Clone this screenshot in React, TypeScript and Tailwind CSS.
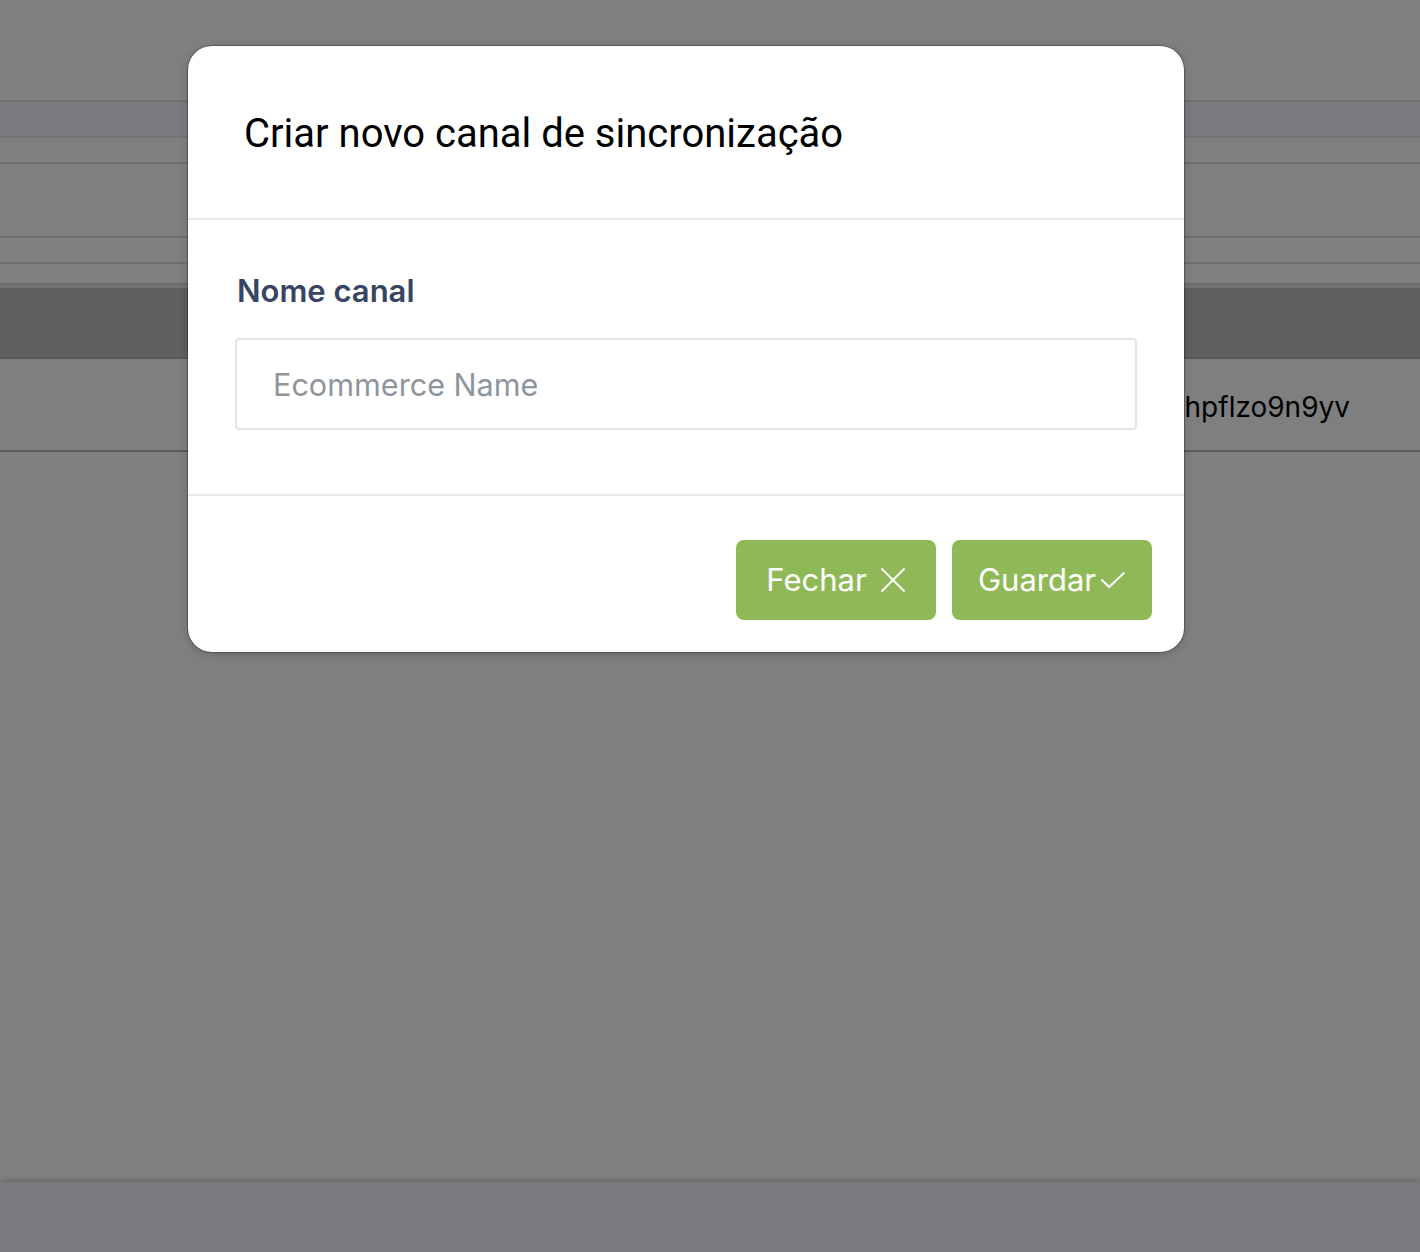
import React from "react";

const XIcon = () => (
  <svg width="26" height="26" viewBox="0 0 26 26" fill="none" stroke="currentColor" strokeWidth="2">
    <path d="M1.5 1.5L24.5 24.5M24.5 1.5L1.5 24.5" />
  </svg>
);

const CheckIcon = () => (
  <svg width="26" height="18" viewBox="0 0 26 18" fill="none" stroke="currentColor" strokeWidth="2">
    <path d="M1.5 8.5L9 16L24.5 1.5" />
  </svg>
);

const BackgroundPage = () => (
  <div className="flex h-[1252px] flex-col bg-white">
    <div className="h-[100px]" />
    <div className="h-[38px] border-y-2 border-t-[#dfe3e8] border-b-[#e6e9ee] bg-[#f4f7fd]" />
    <div className="h-[26px] border-b-2 border-[#dde2e8]" />
    <div className="h-[74px] border-b-2 border-[#dde2e8]" />
    <div className="h-[26px] border-b-2 border-[#dde2e8]" />
    <div className="h-[21px] border-b-2 border-[#d6d9dd]" />
    <div className="h-[3px] bg-[#e4e4e4]" />
    <div className="h-[71px] border-b-2 border-[#b0b0b0] bg-[#bebebe]" />
    <div className="flex h-[93px] items-center justify-end border-b-2 border-[#b8b8b8] pr-[70px]">
      <span className="pt-[4px] font-['Inter'] text-[28px] text-black">hpflzo9n9yv</span>
    </div>
    <div className="flex-1" />
    <div className="h-[70px] bg-[#f4f6fc] shadow-[0_-2px_6px_rgba(0,0,0,0.18)]" />
  </div>
);

export default function App() {
  return (
    <div className="relative h-[1252px] w-full overflow-hidden">
      <BackgroundPage />
      <div className="absolute inset-0 bg-black/50">
        <div className="ml-[188px] mt-[46px] w-[996px] overflow-hidden rounded-[24px] bg-white shadow-[0_0_0_1px_rgba(0,0,0,0.25),0_2px_8px_rgba(0,0,0,0.2)]">
          <div className="flex h-[174px] items-center border-b-2 border-[#e9e9e9] px-[56px] pt-[3px]">
            <h2 className="font-['Roboto'] text-[40px] leading-[48px] text-black">
              Criar novo canal de sincronização
            </h2>
          </div>
          <div className="flex flex-col gap-[29px] border-b-2 border-[#e9e9e9] px-[47px] pb-[64px] pt-[53px]">
            <label className="pl-[2px] font-['Inter'] text-[31px] font-semibold leading-[36px] text-[#384462]">
              Nome canal
            </label>
            <input
              type="text"
              placeholder="Ecommerce Name"
              className="h-[92px] w-full rounded-[4px] border-2 border-[#e3e3e3] px-[36px] font-['Inter'] text-[30.6px] text-[#333] outline-none placeholder:text-[#8e959d]"
            />
          </div>
          <div className="flex justify-end gap-[16px] px-[32px] pb-[32px] pt-[44px]">
            <button className="flex h-[80px] w-[200px] items-center justify-center gap-[13px] rounded-[8px] bg-[#8fb956] font-['Inter'] text-[31px] text-white">
              Fechar
              <XIcon />
            </button>
            <button className="flex h-[80px] w-[200px] items-center justify-center gap-[4px] rounded-[8px] bg-[#8fb956] font-['Inter'] text-[31px] text-white">
              Guardar
              <CheckIcon />
            </button>
          </div>
        </div>
      </div>
    </div>
  );
}
